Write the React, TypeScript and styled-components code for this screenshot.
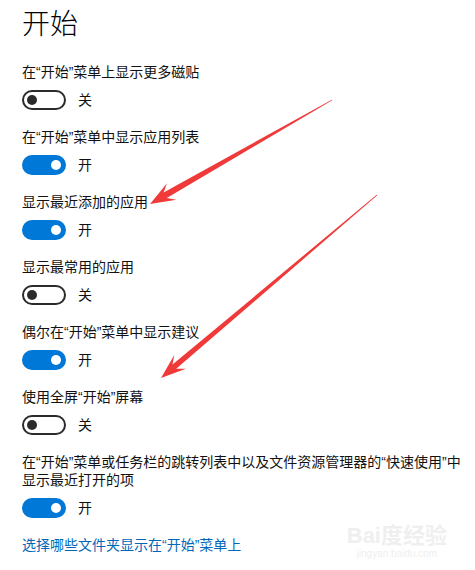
import React from "react";
import styled, { createGlobalStyle } from "styled-components";

const GlobalStyle = createGlobalStyle`
  html, body {
    margin: 0;
    padding: 0;
    background: #ffffff;
  }
  body {
    font-family: "Liberation Sans", "Noto Sans CJK SC", sans-serif;
    color: #000000;
  }
`;

const Page = styled.div`
  position: relative;
  width: 475px;
  height: 570px;
  overflow: hidden;
  box-sizing: border-box;
  padding: 7px 13px 0 22px;
  display: flex;
  flex-direction: column;
`;

const Title = styled.h1`
  margin: 0 0 20px 0;
  font-size: 28px;
  line-height: 36px;
  font-weight: 300;
  color: #000000;
`;

const Setting = styled.div`
  display: flex;
  flex-direction: column;
  gap: 9px;
  margin-bottom: 18px;
`;

const Label = styled.div`
  font-size: 14px;
  line-height: 18px;
  color: #111111;
  white-space: nowrap;
`;

const ToggleRow = styled.div`
  display: flex;
  align-items: center;
  gap: 12px;
  height: 20px;
`;

const Track = styled.div<{ $on: boolean }>`
  box-sizing: border-box;
  width: 44px;
  height: 20px;
  border-radius: 10px;
  border: 2px solid ${(p) => (p.$on ? "#0078d7" : "#2b2b2b")};
  background: ${(p) => (p.$on ? "#0078d7" : "#ffffff")};
  display: flex;
  align-items: center;
  justify-content: ${(p) => (p.$on ? "flex-end" : "flex-start")};
  padding: 0 3px;
`;

const Knob = styled.div<{ $on: boolean }>`
  width: 10px;
  height: 10px;
  border-radius: 50%;
  background: ${(p) => (p.$on ? "#ffffff" : "#2b2b2b")};
`;

const State = styled.span`
  font-size: 14px;
  line-height: 18px;
  color: #111111;
`;

const Link = styled.a`
  font-size: 14px;
  line-height: 18px;
  color: #0067b8;
  text-decoration: none;
  cursor: pointer;
`;

const Overlay = styled.svg`
  position: absolute;
  left: 0;
  top: 0;
  pointer-events: none;
`;

const Watermark = styled.div`
  position: absolute;
  right: 28px;
  bottom: 10px;
  display: flex;
  flex-direction: column;
  align-items: center;
  color: #efefef;
  pointer-events: none;
`;

const MarkBig = styled.span`
  font-size: 22px;
  font-weight: 700;
  line-height: 24px;
`;

const MarkSmall = styled.span`
  font-size: 10px;
  line-height: 12px;
`;

type Pt = [number, number];

const arrowPoints = (tail: Pt, tip: Pt, shaft: number, headLen: number, headHalf: number) => {
  const dx = tip[0] - tail[0];
  const dy = tip[1] - tail[1];
  const len = Math.hypot(dx, dy);
  const ux = dx / len;
  const uy = dy / len;
  const nx = -uy;
  const ny = ux;
  const at = (back: number, side: number): string =>
    `${(tip[0] - ux * back + nx * side).toFixed(1)},${(tip[1] - uy * back + ny * side).toFixed(1)}`;
  const tl = (side: number): string =>
    `${(tail[0] + nx * side).toFixed(1)},${(tail[1] + ny * side).toFixed(1)}`;
  return [
    tl(0.4),
    at(headLen * 0.7, shaft),
    at(headLen, headHalf),
    at(0, 0),
    at(headLen, -headHalf),
    at(headLen * 0.7, -shaft),
    tl(-0.4),
  ].join(" ");
};

const settings = [
  { label: "在“开始”菜单上显示更多磁贴", on: false },
  { label: "在“开始”菜单中显示应用列表", on: true },
  { label: "显示最近添加的应用", on: true },
  { label: "显示最常用的应用", on: false },
  { label: "偶尔在“开始”菜单中显示建议", on: true },
  { label: "使用全屏“开始”屏幕", on: false },
];

const Toggle = ({ on }: { on: boolean }) => (
  <ToggleRow>
    <Track $on={on}>
      <Knob $on={on} />
    </Track>
    <State>{on ? "开" : "关"}</State>
  </ToggleRow>
);

const App = () => {
  return (
    <>
      <GlobalStyle />
      <Page>
        <Title>开始</Title>
        {settings.map((s) => (
          <Setting key={s.label}>
            <Label>{s.label}</Label>
            <Toggle on={s.on} />
          </Setting>
        ))}
        <Setting>
          <Label>
            在“开始”菜单或任务栏的跳转列表中以及文件资源管理器的“快速使用”中
            <br />
            显示最近打开的项
          </Label>
          <Toggle on={true} />
        </Setting>
        <Link>选择哪些文件夹显示在“开始”菜单上</Link>

        <Watermark>
          <MarkBig>Bai度经验</MarkBig>
          <MarkSmall>jingyan.baidu.com</MarkSmall>
        </Watermark>

        <Overlay width="475" height="570" viewBox="0 0 475 570">
          <polygon
            points={arrowPoints([332, 100], [150, 204], 3.2, 25, 9.5)}
            fill="#f03a3a"
          />
          <polygon
            points={arrowPoints([377, 195], [161, 378], 2.8, 25, 9)}
            fill="#f03a3a"
          />
        </Overlay>
      </Page>
    </>
  );
};

export default App;
